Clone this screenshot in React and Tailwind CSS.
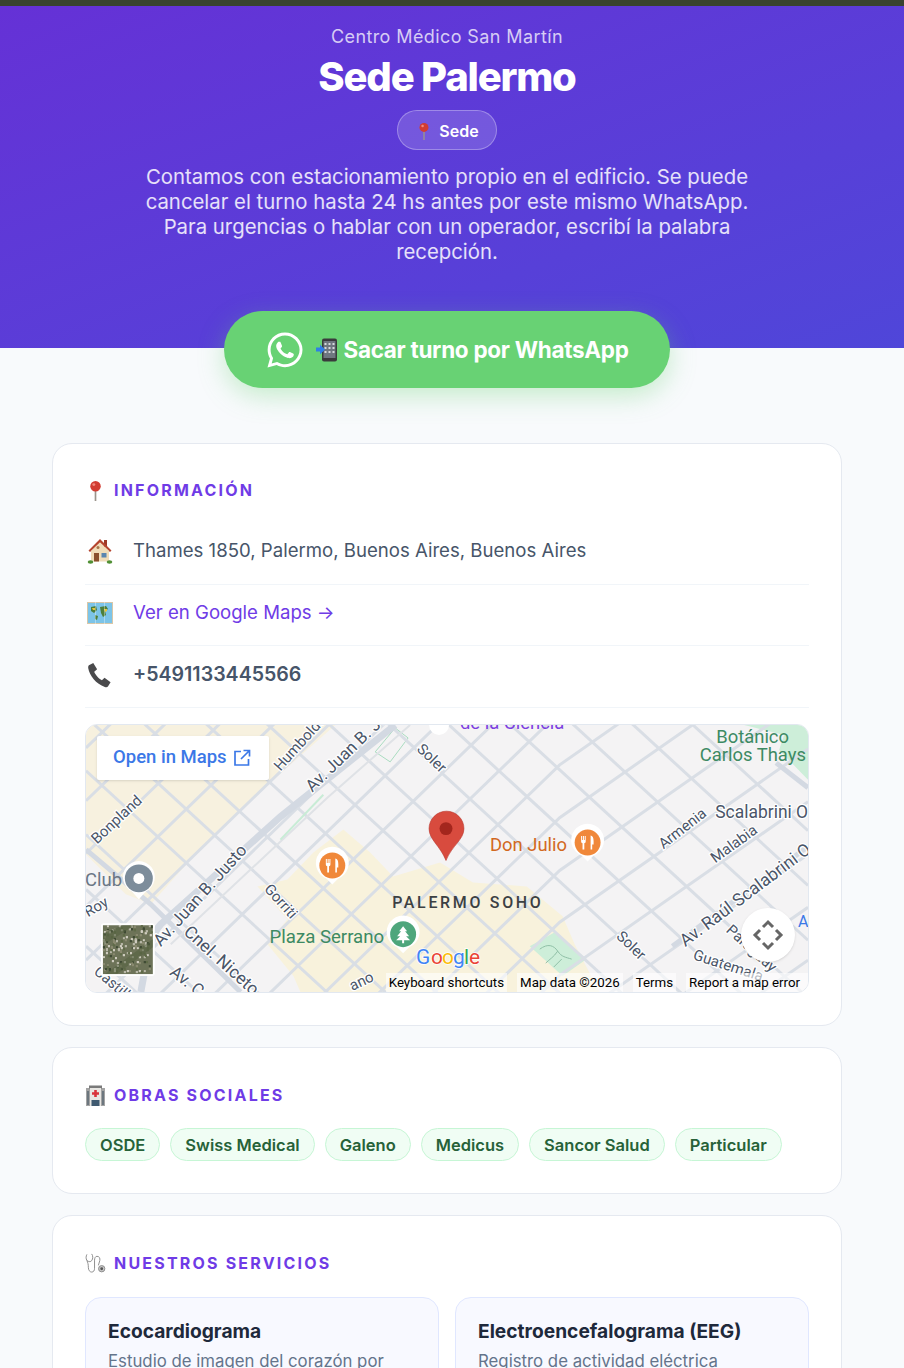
import React from 'react';
import { FaWhatsapp } from 'react-icons/fa';

const PinIcon = ({ size = 21 }) => (
  <svg width={size} height={size} viewBox="0 0 20 20">
    <path d="M10 10v10" stroke="#9a948c" strokeWidth="1.6" />
    <circle cx="10" cy="6" r="5" fill="#d23c32" />
    <circle cx="8.4" cy="4.4" r="1.4" fill="#f08a7e" />
  </svg>
);

const HouseIcon = () => (
  <svg width="26" height="26" viewBox="0 0 26 26">
    <rect x="17" y="2" width="3" height="7" fill="#9c3a28" />
    <path d="M13 1 1.500 12.500 3 14 13 4.500 23 14l1.500-1.500z" fill="#b5452f" />
    <path d="M13 4.500 4 13v10.500h18V13z" fill="#f0dcb8" />
    <rect x="7" y="15" width="5" height="8.500" fill="#8a4f2c" />
    <rect x="14.500" y="15" width="5" height="4.500" fill="#5a86b0" />
    <circle cx="11" cy="9.500" r="1.500" fill="#a9764a" />
    <ellipse cx="3.500" cy="24" rx="2.800" ry="1.800" fill="#4f8f33" />
    <ellipse cx="22.500" cy="24" rx="2.800" ry="1.800" fill="#4f8f33" />
  </svg>
);

const MapIcon = () => (
  <svg width="26" height="24" viewBox="0 0 26 24">
    <rect x="0" y="1" width="26" height="22" fill="#d8c7a8" />
    <rect x="1" y="2" width="24" height="20" fill="#7cc4e8" />
    <path d="M4 6l5-1 1 4-3 3-3-2zM13 6l6-1 2 3-3 2 1 4-3 2-2-4zM8 14l3 1-1 4-2-1z" fill="#4c7f3a" />
    <path d="M17 8l3 0 0 2-2 1zM5 7l3 0 0 2-2 0z" fill="#e6c53c" />
    <path d="M8.500 1v22M17.500 1v22" stroke="#ffffff" strokeOpacity=".35" />
  </svg>
);

const PhoneIcon = () => (
  <svg width="26" height="26" viewBox="0 0 27 27">
    <path d="M2 3.500 6.500 1l4 6.500-3 2.600c1 3 4.800 7.500 8 8.800l2.700-2.600 6.300 4.700-2.600 4.300c-.8 1-2 1-3.400.6C9.500 23 2.500 14 1.300 6.500c-.2-1.300 0-2.300.7-3z" fill="#4a4a4c" />
  </svg>
);

const HospitalIcon = () => (
  <svg width="21" height="21" viewBox="0 0 21 21">
    <rect x="1" y="3" width="19" height="18" fill="#a3a3a3" />
    <rect x="4" y="0.500" width="13" height="3" fill="#7a7a7a" />
    <rect x="5" y="3" width="11" height="18" fill="#e8e6e2" />
    <path d="M9.200 5h2.600v2.200H14v2.600h-2.200V12H9.200V9.800H7V7.200h2.200z" fill="#d9323a" />
    <rect x="6.500" y="15" width="8" height="6" fill="#3f5a70" />
    <rect x="2" y="6" width="2" height="14" fill="#6c767e" />
    <rect x="17" y="6" width="2" height="14" fill="#6c767e" />
  </svg>
);

const StethIcon = () => (
  <svg width="21" height="22" viewBox="0 0 22 22" fill="none" stroke="#8b8b8b" strokeWidth="1">
    <path d="M2 2c-1 2-1.300 4 0 6.500 1 2 1.500 4 1.500 7 0 3 1.500 5 3.500 5s3-1.500 3-4V8c0-2 .8-4 2.500-4" />
    <path d="M7 1.500c1.500 2 1.500 5 0 7-1 1.300-2.500 1.600-5 0" />
    <path d="M12.500 4c2.500 0 3.500 2 3 4.500l-1.500 5" />
    <circle cx="17.500" cy="17" r="3.300" fill="#c9c9c9" />
    <circle cx="17.500" cy="17" r="1.500" fill="#555" stroke="none" />
  </svg>
);

const MobileArrowIcon = () => (
  <svg width="24" height="24" viewBox="0 0 24 24">
    <rect x="6" y="0.500" width="15" height="23" rx="2" fill="#3a3a3c" />
    <rect x="7.500" y="3" width="12" height="17" fill="#6f7680" />
    <path d="M8.500 5h2v2h-2zM12.500 5h2v2h-2zM16.500 5h2v2h-2zM8.500 9h2v2h-2zM12.500 9h2v2h-2zM16.500 9h2v2h-2zM8.500 13h2v2h-2zM12.500 13h2v2h-2zM16.500 13h2v2h-2z" fill="#d5d8dc" />
    <path d="M0 9.500h4V6.500l5 5-5 5v-3H0z" fill="#2f7fe6" />
  </svg>
);

// diagonal street grid, in page pixels
const streetsA = [-560, -505, -450, -392, -335, -280, -225, -168, -112, -55, -8, 46, 110, 165, 222, 280, 335, 392];
const streetsB = [748, 801, 854, 907, 961, 1014, 1067, 1120, 1173, 1226, 1279, 1332, 1384, 1437, 1490, 1543, 1596];

function satelliteSpecks() {
  const out = [];
  let seed = 7;
  for (let i = 0; i < 300; i++) {
    seed = (seed * 73 + 41) % 1009;
    const x = 102 + (seed % 49);
    seed = (seed * 73 + 41) % 1009;
    const y = 926 + (seed % 47);
    const c = ['#b9b8a8', '#5f6b48', '#8a8a70', '#3f4a34', '#d0cdc0'][seed % 5];
    out.push(<rect key={i} x={x} y={y} width="2" height="2" fill={c} />);
  }
  return out;
}

const mapLabel = { fontFamily: 'Roboto, sans-serif', fill: '#4a5568', stroke: '#ffffff', strokeWidth: 2.500, paintOrder: 'stroke' };

function Poi({ x, y, color, children }) {
  return (
    <g transform={`translate(${x} ${y})`}>
      <path d="M0 19-6 13A16.500 16.500 0 1 1 6 13Z" fill="#ffffff" />
      <circle cx="0" cy="0" r="13" fill={color} />
      {children}
    </g>
  );
}

const Fork = () => (
  <g fill="#ffffff">
    <path d="M-6.500-6.500h1v4h.8v-4h1v4h.8v-4h1v5.500c0 1-.7 1.500-1.400 1.700V7h-1.800V.7c-.7-.2-1.400-.7-1.400-1.700z" />
    <path d="M3-7c2 0 3 2.500 3 5.500V2H4.600v5H3z" />
  </g>
);

function MapDrawing() {
  return (
    <svg className="block w-full h-full" viewBox="85 725 724 268" preserveAspectRatio="none">
      <rect x="85" y="725" width="724" height="268" fill="#f4f3f4" />
      {/* commercial areas */}
      <path d="M85 725H335L250 800 190 860 150 905 125 895 85 855Z" fill="#f7f1df" />
      <path d="M257 887 287 880 313 853 343 830 370 853 393 877 440 863 473 883 527 887 563 917 575 945 600 993H300L293 977 267 945 287 920Z" fill="#f8f2dc" />
      {/* parks */}
      <path d="M745 725H809V780L780 750 785 735Z" fill="#cdeed9" />
      <path d="M530 947 555 933 587 960 563 977Z" fill="#cdeed9" />
      <path d="M540 950c8-6 14-4 18 2s8 6 14 8m-26 4c4-4 8-6 12-12m-4 16 8-8" fill="none" stroke="#8fbfa6" strokeWidth="1" />
      <path d="M375 752 395 728 408 738 390 762Z" fill="none" stroke="#a9dcc0" strokeWidth="1" />
      {/* streets */}
      {streetsA.map((o) => (
        <line key={o} x1="85" y1={725 + o} x2="809" y2={725 + o + 724 * 0.92} stroke="#d9dee5" strokeWidth="3" />
      ))}
      {streetsB.map((o) => (
        <polyline key={o} points={`85,${o} 560,${o - 461} 809,${o - 461 - 174}`} fill="none" stroke="#d9dee5" strokeWidth="3" />
      ))}
      {/* avenues */}
      <path d="M140 993C146 960 150 935 160 925L280 817 395 725" fill="none" stroke="#d3d9e2" strokeWidth="7" />
      <path d="M85 850 150 905 240 993" fill="none" stroke="#d3d9e2" strokeWidth="5" />
      <path d="M673 947 809 847" fill="none" stroke="#d3d9e2" strokeWidth="5" />
      <path d="M777 763 809 788" fill="none" stroke="#d3d9e2" strokeWidth="5" />
      <path d="M170 945 327 798 410 725" fill="none" stroke="#dfe2e6" strokeWidth="2" />
      <path d="M280 840 323 795" fill="none" stroke="#c8ecd6" strokeWidth="2" />
      {/* street names */}
      <g style={mapLabel} fontSize="15">
        <text transform="translate(280 772) rotate(-48)">Humboldt</text>
        <text transform="translate(312 793) rotate(-44)" fontSize="17">Av. Juan B. Justo</text>
        <text transform="translate(96 845) rotate(-43)">Bonpland</text>
        <text transform="translate(160 948) rotate(-48)" fontSize="17">Av. Juan B. Justo</text>
        <text transform="translate(182 934) rotate(42)" fontSize="17.500">Cnel. Niceto</text>
        <text transform="translate(168 975) rotate(38)" fontSize="17">Av. C</text>
        <text transform="translate(263 890) rotate(48)">Gorriti</text>
        <text transform="translate(416 750) rotate(44)">Soler</text>
        <text transform="translate(616 938) rotate(44)">Soler</text>
        <text transform="translate(664 850) rotate(-38)">Armenia</text>
        <text transform="translate(716 864) rotate(-36)">Malabia</text>
        <text transform="translate(686 948) rotate(-37)" fontSize="17.500">Av. Raúl Scalabrini O</text>
        <text transform="translate(726 932) rotate(42)">Paraguay</text>
        <text transform="translate(693 960) rotate(18)">Guatemala</text>
        <text x="716" y="818" fontSize="17.500">Scalabrini O</text>
        <text transform="translate(87 918) rotate(-30)">Roy</text>
        <text transform="translate(352 992) rotate(-25)">ano</text>
        <text transform="translate(92 974) rotate(40)">Castillo</text>
      </g>
      <text x="84" y="887" fontFamily="Roboto, sans-serif" fontSize="18.500" fill="#6b7785">Club</text>
      <text x="460" y="729" fontFamily="Roboto, sans-serif" fontSize="18.500" fill="#7b3fe0">de la Ciencia</text>
      <text x="799" y="928" fontFamily="Roboto, sans-serif" fontSize="16" fill="#3b78e7">A</text>
      <text x="392" y="909" fontFamily="Roboto, sans-serif" fontSize="16" fontWeight="500" letterSpacing="2.700" fill="#3c4043">PALERMO SOHO</text>
      <text x="269" y="944" fontFamily="Roboto, sans-serif" fontSize="18.700" fill="#3d8a63">Plaza Serrano</text>
      <text x="490" y="851" fontFamily="Roboto, sans-serif" fontSize="18.500" fill="#d2691e">Don Julio</text>
      <text y="743" textAnchor="end" fontFamily="Roboto, sans-serif" fontSize="18.500" fill="#3d8a63"><tspan x="790">Botánico</tspan><tspan x="807" dy="18">Carlos Thays</tspan></text>
      {/* pois */}
      <g transform="translate(138 879)">
        <path d="M0 21-7 13A16 16 0 1 1 7 13Z" fill="#ffffff" />
        <circle r="14" fill="#7d8d9b" />
        <circle r="5.500" fill="#ffffff" />
      </g>
      <Poi x={332} y={866} color="#f0883a"><Fork /></Poi>
      <Poi x={588} y={843} color="#f0883a"><Fork /></Poi>
      <Poi x={403} y={935} color="#4ea67c"><path d="M0-8 4-3H2L6 2H3L7 6H1V9H-1V6H-7L-3 2H-6L-2-3H-4Z" fill="#ffffff" /></Poi>
      <g transform="translate(439 725)"><circle r="10" fill="#ffffff" /></g>
      {/* marker */}
      <path d="M446 861C440 846 429 840 429 829a17 17 0 0 1 35 0C464 840 452 846 446 861Z" fill="#d84b3e" stroke="#b8352c" strokeWidth=".6" />
      <circle cx="446" cy="829" r="6.500" fill="#a3261d" />
      {/* google logo */}
      <g fontFamily="Roboto, sans-serif" fontSize="21" stroke="#ffffff" strokeWidth="1.500" paintOrder="stroke">
        <text x="416" y="965" fill="#4285f4">G</text>
        <text x="431" y="965" fill="#ea4335">o</text>
        <text x="442" y="965" fill="#fbbc05">o</text>
        <text x="453" y="965" fill="#4285f4">g</text>
        <text x="464" y="965" fill="#34a853">l</text>
        <text x="469" y="965" fill="#ea4335">e</text>
      </g>
      {/* satellite thumbnail */}
      <rect x="100" y="924" width="54" height="53" rx="3" fill="#ffffff" />
      <rect x="102" y="926" width="50" height="49" fill="#6d7358" />
      {satelliteSpecks()}
      <path d="M102 934 122 926H134L102 946ZM104 975 152 940V948L116 975Z" fill="#54603f" fillOpacity=".55" />
    </svg>
  );
}

function MapEmbed() {
  return (
    <div className="relative h-[269px] rounded-xl border border-[#e2e8f0] overflow-hidden">
      <MapDrawing />
      <div className="absolute left-[11px] top-[11px] w-[172px] h-[44px] bg-white rounded-[2px] shadow-sm flex items-center pl-4 gap-[6px] text-[#3b78e7] text-[18.500px] font-medium font-['Roboto',sans-serif]">
        Open in Maps
        <svg width="18" height="18" viewBox="0 0 18 18" fill="none" stroke="#3b78e7" strokeWidth="1.700">
          <path d="M8 2.500H2v13.500h13.500V10M10.500 1.500h6v6M16.500 1.500 8 10" />
        </svg>
      </div>
      <div className="absolute right-[13px] top-[183px] w-[54px] h-[54px] rounded-full bg-white shadow-sm flex items-center justify-center">
        <svg width="32" height="32" viewBox="0 0 32 32" fill="none" stroke="#666666" strokeWidth="3">
          <path d="M11 8 16 3 21 8M11 24 16 29 21 24M8 11 3 16 8 21M24 11 29 16 24 21" />
        </svg>
      </div>
      <div className="absolute right-0 bottom-0 h-[18px] flex items-center text-[13.300px] text-black font-['Roboto',sans-serif] whitespace-nowrap">
        <span className="bg-white/60 pl-[3px] pr-[3px] mr-[10px]">Keyboard shortcuts</span>
        <span className="bg-white/60 px-[3px] mr-[10px]">Map data ©2026</span>
        <span className="bg-white/60 px-[3px] mr-[10px]">Terms</span>
        <span className="bg-white/60 pl-[3px] pr-[8px]">Report a map error</span>
      </div>
    </div>
  );
}

function SectionTitle({ icon, children }) {
  return (
    <h2 className="flex items-center gap-2 text-[16px] leading-[24px] font-bold tracking-[2.200px] text-[#6f3be6]">
      {icon}
      {children}
    </h2>
  );
}

const insurers = ['OSDE', 'Swiss Medical', 'Galeno', 'Medicus', 'Sancor Salud', 'Particular'];

const services = [
  { name: 'Ecocardiograma', desc: 'Estudio de imagen del corazón por ultrasonido.' },
  { name: 'Electroencefalograma (EEG)', desc: 'Registro de actividad eléctrica cerebral mediante electrodos.' },
];

export default function App() {
  return (
    <div className="h-screen overflow-hidden bg-[#f8fafc] font-['Inter',sans-serif]">
      <div className="h-[6px] bg-[#39432f]" />

      {/* Hero */}
      <header className="h-[342px] bg-gradient-to-br from-[#6531d6] to-[#4f46d9] pt-[18px] pr-[10px] text-center">
        <p className="text-[18px] leading-[26px] tracking-[0.400px] text-white/75">Centro Médico San Martín</p>
        <h1 className="mt-[1px] text-[40px] leading-[52px] font-extrabold tracking-[-1.200px] text-white">Sede Palermo</h1>
        <div className="mt-[7px] mx-auto w-[100px] h-[40px] rounded-full border border-white/30 bg-white/15 flex items-center justify-center gap-[6px] pt-[1px] text-[16px] font-semibold text-white">
          <PinIcon size={18} />
          Sede
        </div>
        <p className="mt-[14px] mx-auto w-[620px] text-[20.350px] leading-[25px] text-white/85">
          Contamos con estacionamiento propio en el edificio. Se puede cancelar el turno hasta 24 hs antes por este mismo WhatsApp. Para urgencias o hablar con un operador, escribí la palabra recepción.
        </p>
      </header>

      {/* CTA */}
      <div className="relative -mt-[37px] pr-[10px] flex justify-center">
        <a className="w-[446px] h-[77px] rounded-full bg-[#68d274] shadow-[0_8px_26px_rgba(104,210,116,0.35)] flex items-center justify-center gap-[11px] text-white text-[22.500px] font-bold tracking-[-0.300px]">
          <FaWhatsapp size={40} />
          <span className="flex items-center gap-[3px]">
            <MobileArrowIcon />
            Sacar turno por WhatsApp
          </span>
        </a>
      </div>

      <main className="ml-[52px] w-[790px] mt-[55px] flex flex-col gap-[21px]">
        {/* Info */}
        <section className="bg-white border border-[#e5e9f0] rounded-[20px] px-[32px] pt-[34px] pb-[32px]">
          <SectionTitle icon={<PinIcon size={21} />}>INFORMACIÓN</SectionTitle>
          <div className="mt-[19px] flex flex-col">
            <div className="h-[64px] pb-[3px] pl-[2px] flex items-center gap-[20px] border-b border-[#f1f5f9] text-[18.600px] text-[#475569]">
              <HouseIcon />
              Thames 1850, Palermo, Buenos Aires, Buenos Aires
            </div>
            <div className="h-[61px] pb-[4px] pl-[2px] flex items-center gap-[20px] border-b border-[#f1f5f9] text-[18.600px] text-[#6f3be6]">
              <MapIcon />
              Ver en Google Maps →
            </div>
            <div className="h-[62px] pb-[3px] pl-[2px] flex items-center gap-[20px] border-b border-[#f1f5f9] text-[19.600px] font-semibold text-[#475569]">
              <PhoneIcon />
              +5491133445566
            </div>
          </div>
          <div className="mt-[16px]">
            <MapEmbed />
          </div>
        </section>

        {/* Insurers */}
        <section className="bg-white border border-[#e5e9f0] rounded-[20px] px-[32px] pt-[35px] pb-[32px]">
          <SectionTitle icon={<HospitalIcon />}>OBRAS SOCIALES</SectionTitle>
          <div className="mt-[21px] flex gap-[10px]">
            {insurers.map((name) => (
              <span key={name} className="h-[33px] px-[14px] pt-[1px] flex items-center rounded-full border border-[#c6f6d5] bg-[#f0fdf4] text-[16.500px] font-semibold text-[#276239]">
                {name}
              </span>
            ))}
          </div>
        </section>

        {/* Services */}
        <section className="bg-white border border-[#e5e9f0] rounded-[20px] px-[32px] pt-[35px] pb-[32px]">
          <SectionTitle icon={<StethIcon />}>NUESTROS SERVICIOS</SectionTitle>
          <div className="mt-[22px] grid grid-cols-2 gap-[16px]">
            {services.map((s) => (
              <div key={s.name} className="rounded-[16px] border border-[#e0e7ff] bg-[#f8f9ff] px-[22px] pt-[20px] pb-[20px]">
                <h3 className="text-[19.200px] leading-[26px] font-bold text-[#1e293b]">{s.name}</h3>
                <p className="mt-[5px] text-[16.800px] leading-[24px] text-[#64748b]">{s.desc}</p>
              </div>
            ))}
          </div>
        </section>
      </main>
    </div>
  );
}
